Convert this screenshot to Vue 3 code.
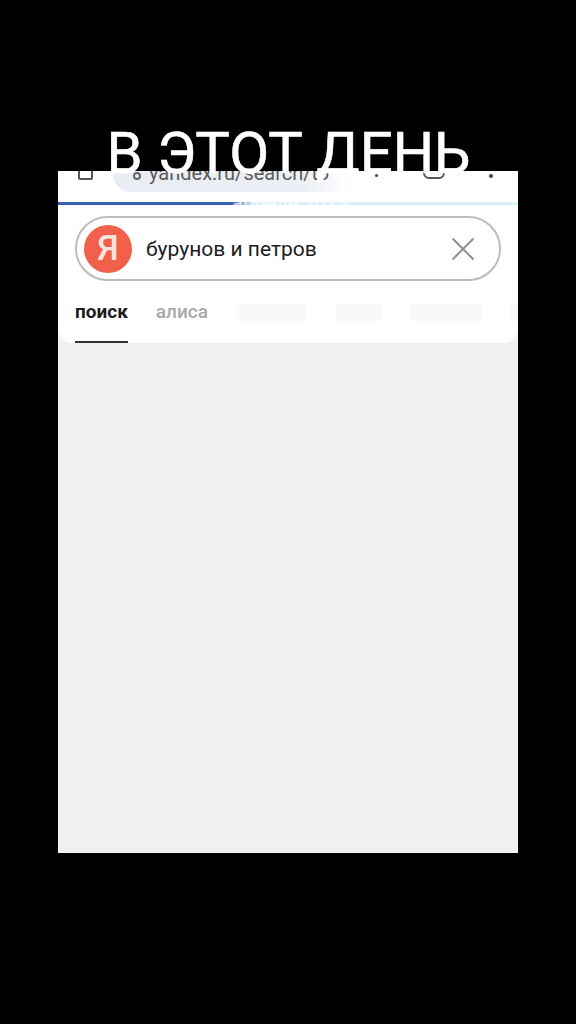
<script setup>
const skeletons = [69, 45, 70, 40]
</script>

<template>
  <div class="page">
    <h1 class="title">В ЭТОТ ДЕНЬ</h1>
    <main class="phone">
      <header class="head">
        <div class="browser">
          <span class="tab-count"></span>
          <div class="url">
            <span class="lock"></span>
            <span class="url-text">yandex.ru/search/to</span>
          </div>
          <span class="dot small"></span>
          <span class="shield"></span>
          <span class="dot"></span>
        </div>
        <div class="progress">
          <div class="bar"></div>
          <span class="date">апреля 2023</span>
        </div>
        <div class="search">
          <div class="logo">Я</div>
          <span class="query">бурунов и петров</span>
          <svg class="close" viewBox="0 0 24 24" aria-label="Очистить">
            <path d="M1.500 1.500 22.500 22.500M22.500 1.500 1.500 22.500" />
          </svg>
        </div>
        <nav class="tabs">
          <span class="tab active">поиск</span>
          <span class="tab">алиса</span>
          <span
            v-for="(w, i) in skeletons"
            :key="i"
            class="skeleton"
            :style="{ width: w + 'px' }"
          ></span>
        </nav>
      </header>
    </main>
  </div>
</template>

<style scoped>
.page {
  position: relative;
  height: 1024px;
  padding: 171px 58px 0;
  box-sizing: border-box;
  background: #000;
  font-family: Roboto, "Liberation Sans", sans-serif;
  overflow: hidden;
}
.title {
  position: absolute;
  z-index: 2;
  top: 118px;
  left: 0;
  width: 577px;
  margin: 0;
  text-align: center;
  color: #fff;
  font-size: 58px;
  font-weight: 400;
  line-height: 70px;
  white-space: nowrap;
  -webkit-text-stroke: .6px #fff;
}
.phone {
  height: 682px;
  background: #f1f1f1;
}
.head {
  height: 172px;
  background: #fff;
  border-radius: 0 0 14px 14px;
  box-shadow: 0 2px 5px rgba(0, 0, 0, .02);
  overflow: hidden;
}
.browser {
  display: flex;
  align-items: flex-start;
  height: 30px;
  padding-left: 20px;
  overflow: hidden;
}
.tab-count {
  flex: none;
  width: 15px;
  height: 16px;
  margin-top: -7px;
  border: 2px solid #555;
  border-radius: 2px;
  box-sizing: border-box;
}
.url {
  display: flex;
  flex: none;
  align-items: flex-start;
  width: 237px;
  height: 31px;
  margin: -10px 0 0 20px;
  padding: 2px 0 0 20px;
  box-sizing: border-box;
  background: linear-gradient(90deg, #e9ecf3 0%, #eceff4 80%, #fff 100%);
  border-radius: 0 0 0 18px;
}
.lock {
  flex: none;
  width: 8px;
  height: 8px;
  margin: 9px 8px 0 0;
  border: 2px solid #666;
  border-radius: 50%;
  box-sizing: border-box;
}
.url-text {
  color: #5b5b5b;
  font-size: 20px;
  line-height: 20px;
  white-space: nowrap;
}
.dot {
  flex: none;
  width: 4px;
  height: 4px;
  margin: 3px 0 0 44px;
  background: #444;
  border-radius: 50%;
}
.dot.small {
  margin: 3px 0 0 25px;
  width: 3px;
  height: 3px;
}
.shield {
  flex: none;
  width: 22px;
  height: 14px;
  margin: -6px 0 0 45px;
  border: 2px solid #555;
  border-radius: 6px;
  box-sizing: border-box;
}
.progress {
  position: relative;
  height: 3px;
  margin-top: 1px;
  background: #d8f2f6;
}
.bar {
  width: 196px;
  height: 3px;
  background: linear-gradient(90deg, #3a5eb5 88%, #d8f2f6 100%);
}
.date {
  position: absolute;
  top: -9px;
  left: 174px;
  color: rgba(255, 255, 255, .82);
  font-size: 20px;
  line-height: 20px;
  white-space: nowrap;
}
.search {
  display: flex;
  align-items: center;
  height: 65px;
  margin: 11px 17px 0;
  padding: 0 24px 0 7px;
  box-sizing: border-box;
  background: #fff;
  border: 2px solid #bcbcbc;
  border-radius: 33px;
}
.logo {
  display: flex;
  flex: none;
  align-items: center;
  justify-content: center;
  width: 48px;
  height: 48px;
  background: #f1604a;
  border-radius: 50%;
  color: #fbe4dc;
  font-size: 35px;
  font-weight: 500;
}
.query {
  flex: 1;
  margin-left: 14px;
  color: #1c1c1c;
  font-size: 21px;
  line-height: 28px;
  white-space: nowrap;
}
.close {
  flex: none;
  width: 24px;
  height: 24px;
  fill: none;
  stroke: #8f8f8f;
  stroke-width: 2;
}
.tabs {
  display: flex;
  align-items: center;
  height: 62px;
  margin-left: 17px;
}
.tab {
  display: flex;
  flex: none;
  align-items: center;
  height: 62px;
  margin-right: 28px;
  padding-top: 1px;
  box-sizing: border-box;
  border-bottom: 2px solid transparent;
  color: #a8a8a8;
  font-size: 19px;
  font-weight: 500;
}
.tab.active {
  color: #1c1c1c;
  font-weight: 700;
  border-bottom-color: #333;
}
.skeleton {
  flex: none;
  height: 17px;
  margin: 0 29px 0 1px;
  background: #f9f9f9;
}
</style>
